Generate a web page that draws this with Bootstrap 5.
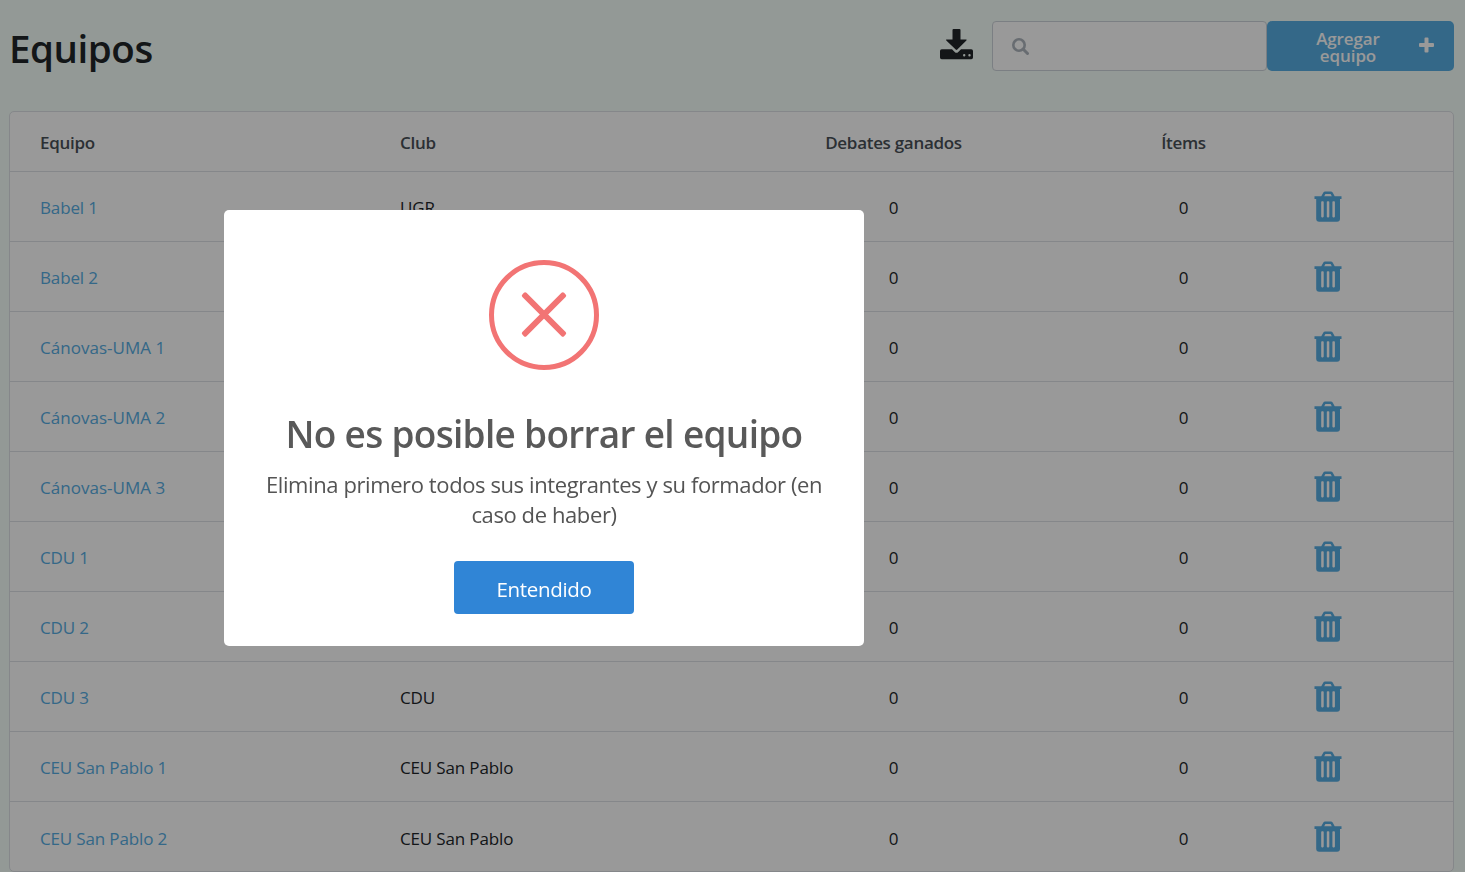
<!DOCTYPE html>
<html lang="es">
<head>
<meta charset="utf-8">
<meta name="viewport" content="width=device-width, initial-scale=1">
<title>Equipos</title>
<link href="https://cdn.jsdelivr.net/npm/bootstrap@5.3.0/dist/css/bootstrap.min.css" rel="stylesheet">
<style>
body{font-family:"Open Sans","Noto Sans",sans-serif;background:#f5fffa;height:872px;overflow:hidden;padding:21px 11px 0 9px}
.page-head{height:50px}
.page-title{font-size:38.5px;font-weight:600;letter-spacing:-.45px;line-height:50px;padding-top:2px}
.dl-icon{width:33px;height:31px;margin:8px 19.5px 0 0;color:#212529}
.search-box{width:275px;height:50px;border:1px solid #ced4da;border-radius:4px;background:#fff;padding-left:19px;color:#adb5bd}
.add-btn{width:187px;height:50px;background:#57ade3;color:#fff;border-radius:5px;padding:0;font-size:17px;font-weight:600;line-height:17px;letter-spacing:-.1px;border:0}
.add-label{width:80px;margin:9px 0 0 41px}
.add-plus{margin:16px 20px 0 0}
.team-card{margin-top:40px;height:761px;border:1px solid #dee2e6;border-radius:5px;background:#fff;overflow:hidden}
.team-table{table-layout:fixed;width:1443px;font-size:17px;letter-spacing:-.15px;color:#212529;margin:0}
.team-table th{height:59px;padding:3px 0 0 30px;color:#495057;font-weight:600;letter-spacing:-.3px;border-bottom:1px solid #dee2e6}
.team-table td{height:70px;padding:3px 0 0 30px;border-bottom:1px solid #dee2e6;color:#212529}
.team-table tr:last-child td:not(.act){padding-top:5px}
.team-table .num{padding-left:0;text-align:center}
.team-table .act{padding:1px 0 0 14px}
.team-table a{color:#57ade3;text-decoration:none}
.team-table .wide{letter-spacing:.03px}
.trash{width:28px;height:32px;display:block;color:#57ade3}
.modal-backdrop.shade{opacity:.4}
.alert-dialog{max-width:640px;width:640px;margin:210px 0 0 224px}
.alert-box{height:436px;border:0;border-radius:5px}
.alert-icon{width:110px;height:110px;margin-top:50px}
.alert-title{font-size:37px;font-weight:600;line-height:50px;margin:39px 0 0;letter-spacing:-.7px;color:#595959}
.alert-text{font-size:22px;line-height:30px;margin:10px 0 0;letter-spacing:-.4px;color:#545454}
.ok-btn{width:180px;height:53px;margin-top:32px;background:#3085d6;border:0;border-radius:4px;color:#fff;font-size:20.5px;letter-spacing:-.3px;padding:3px 0 0}
</style>
</head>
<body>
<svg class="d-none"><symbol id="trash" viewBox="0 0 28 32"><path fill="currentColor" fill-rule="evenodd" d="M.5 5.300h6.800L9.200 1.700Q9.800.5 11.200.5h5.600q1.400 0 2 1.200l1.900 3.600h6.800v2.700h-1.500v19.700q0 3-3 3H5.200q-3 0-3-3V8H.5ZM10.200 5.300h7.600l-1.200-2.200h-5.200ZM7.200 11v14.600q0 .8.8.8h.9q.8 0 .8-.8V11q0-.8-.8-.8H8q-.8 0-.8.8Zm5.600 0v14.600q0 .8.8.8h.9q.8 0 .8-.8V11q0-.8-.8-.8h-.9q-.8 0-.8.8Zm5.600 0v14.600q0 .8.8.8h.9q.8 0 .8-.8V11q0-.8-.8-.8h-.9q-.8 0-.8.8Z"/></symbol></svg>
<header class="page-head d-flex align-items-start">
  <h1 class="page-title mb-0 me-auto">Equipos</h1>
  <svg class="dl-icon" viewBox="0 0 33 31"><path fill="currentColor" fill-rule="evenodd" d="M12.500 1q0-1 1-1h6q1 0 1 1v9.500h5.500q1.300 0 .4 1L17.300 20.600q-.8.700-1.600 0L6.300 11.500q-.9-1 .4-1h5.800ZM1.700 20.300H12l2.700 2.600q1.800 1.700 3.600 0l2.700-2.600h10.300q1.700 0 1.700 1.700v6.500q0 1.700-1.700 1.700H1.700Q0 30.200 0 28.500V22q0-1.700 1.700-1.700ZM23 26.200a1.200 1.200 0 1 0 2.400 0 1.200 1.200 0 1 0-2.400 0Zm5.300 0a1.200 1.200 0 1 0 2.400 0 1.200 1.200 0 1 0-2.400 0Z"/></svg>
  <div class="search-box d-flex align-items-center"><svg width="17" height="17" viewBox="0 0 17 17"><circle cx="7" cy="7" r="5.700" fill="none" stroke="currentColor" stroke-width="2.600"/><path d="m11.300 11.300 4.200 4.200" stroke="currentColor" stroke-width="3" stroke-linecap="round"/></svg></div>
  <button class="btn add-btn d-flex"><span class="add-label">Agregar equipo</span><svg class="add-plus ms-auto" width="15" height="16" viewBox="0 0 15 16"><path fill="currentColor" d="M6.500.5h2q1 0 1 1V6H14q1 0 1 1v2q0 1-1 1H9.500v4.500q0 1-1 1h-2q-1 0-1-1V10H1q-1 0-1-1V7q0-1 1-1h4.500V1.500q0-1 1-1Z"/></svg></button>
</header>
<main class="team-card">
  <table class="team-table">
    <colgroup><col width="360"><col width="350"><col width="347"><col width="233"><col width="153"></colgroup>
    <thead><tr><th>Equipo</th><th>Club</th><th class="num">Debates ganados</th><th class="num">Ítems</th><th></th></tr></thead>
    <tbody id="rows"></tbody>
  </table>
</main>
<div class="modal-backdrop shade"></div>
<div class="modal d-block" tabindex="-1" role="dialog" aria-modal="true">
  <div class="modal-dialog alert-dialog">
    <div class="modal-content alert-box align-items-center text-center">
      <svg class="alert-icon" viewBox="0 0 110 110" fill="none" stroke="#f27474" stroke-width="5"><circle cx="55" cy="55" r="52.500"/><g fill="#f27474" stroke="none"><rect x="25.500" y="51.600" width="59" height="5.800" rx="1.800" transform="rotate(45 55 54.500)"/><rect x="25.500" y="51.600" width="59" height="5.800" rx="1.800" transform="rotate(-45 55 54.500)"/></g></svg>
      <h2 class="alert-title">No es posible borrar el equipo</h2>
      <p class="alert-text">Elimina primero todos sus integrantes y su formador (en<br>caso de haber)</p>
      <button class="btn ok-btn">Entendido</button>
    </div>
  </div>
</div>
<script src="https://cdn.jsdelivr.net/npm/bootstrap@5.3.0/dist/js/bootstrap.bundle.min.js"></script>
<script>
const teams=[["Babel 1","UGR"],["Babel 2",""],["Cánovas-UMA 1",""],["Cánovas-UMA 2",""],["Cánovas-UMA 3",""],["CDU 1",""],["CDU 2",""],["CDU 3","CDU"],["CEU San Pablo 1","CEU San Pablo"],["CEU San Pablo 2","CEU San Pablo"]];
document.getElementById("rows").innerHTML=teams.map(([t,c])=>`<tr><td><a href="#" class="${t.includes("UMA")?"wide":""}">${t}</a></td><td>${c}</td><td class="num">0</td><td class="num">0</td><td class="act"><svg class="trash"><use href="#trash"/></svg></td></tr>`).join("");
</script>
</body>
</html>
